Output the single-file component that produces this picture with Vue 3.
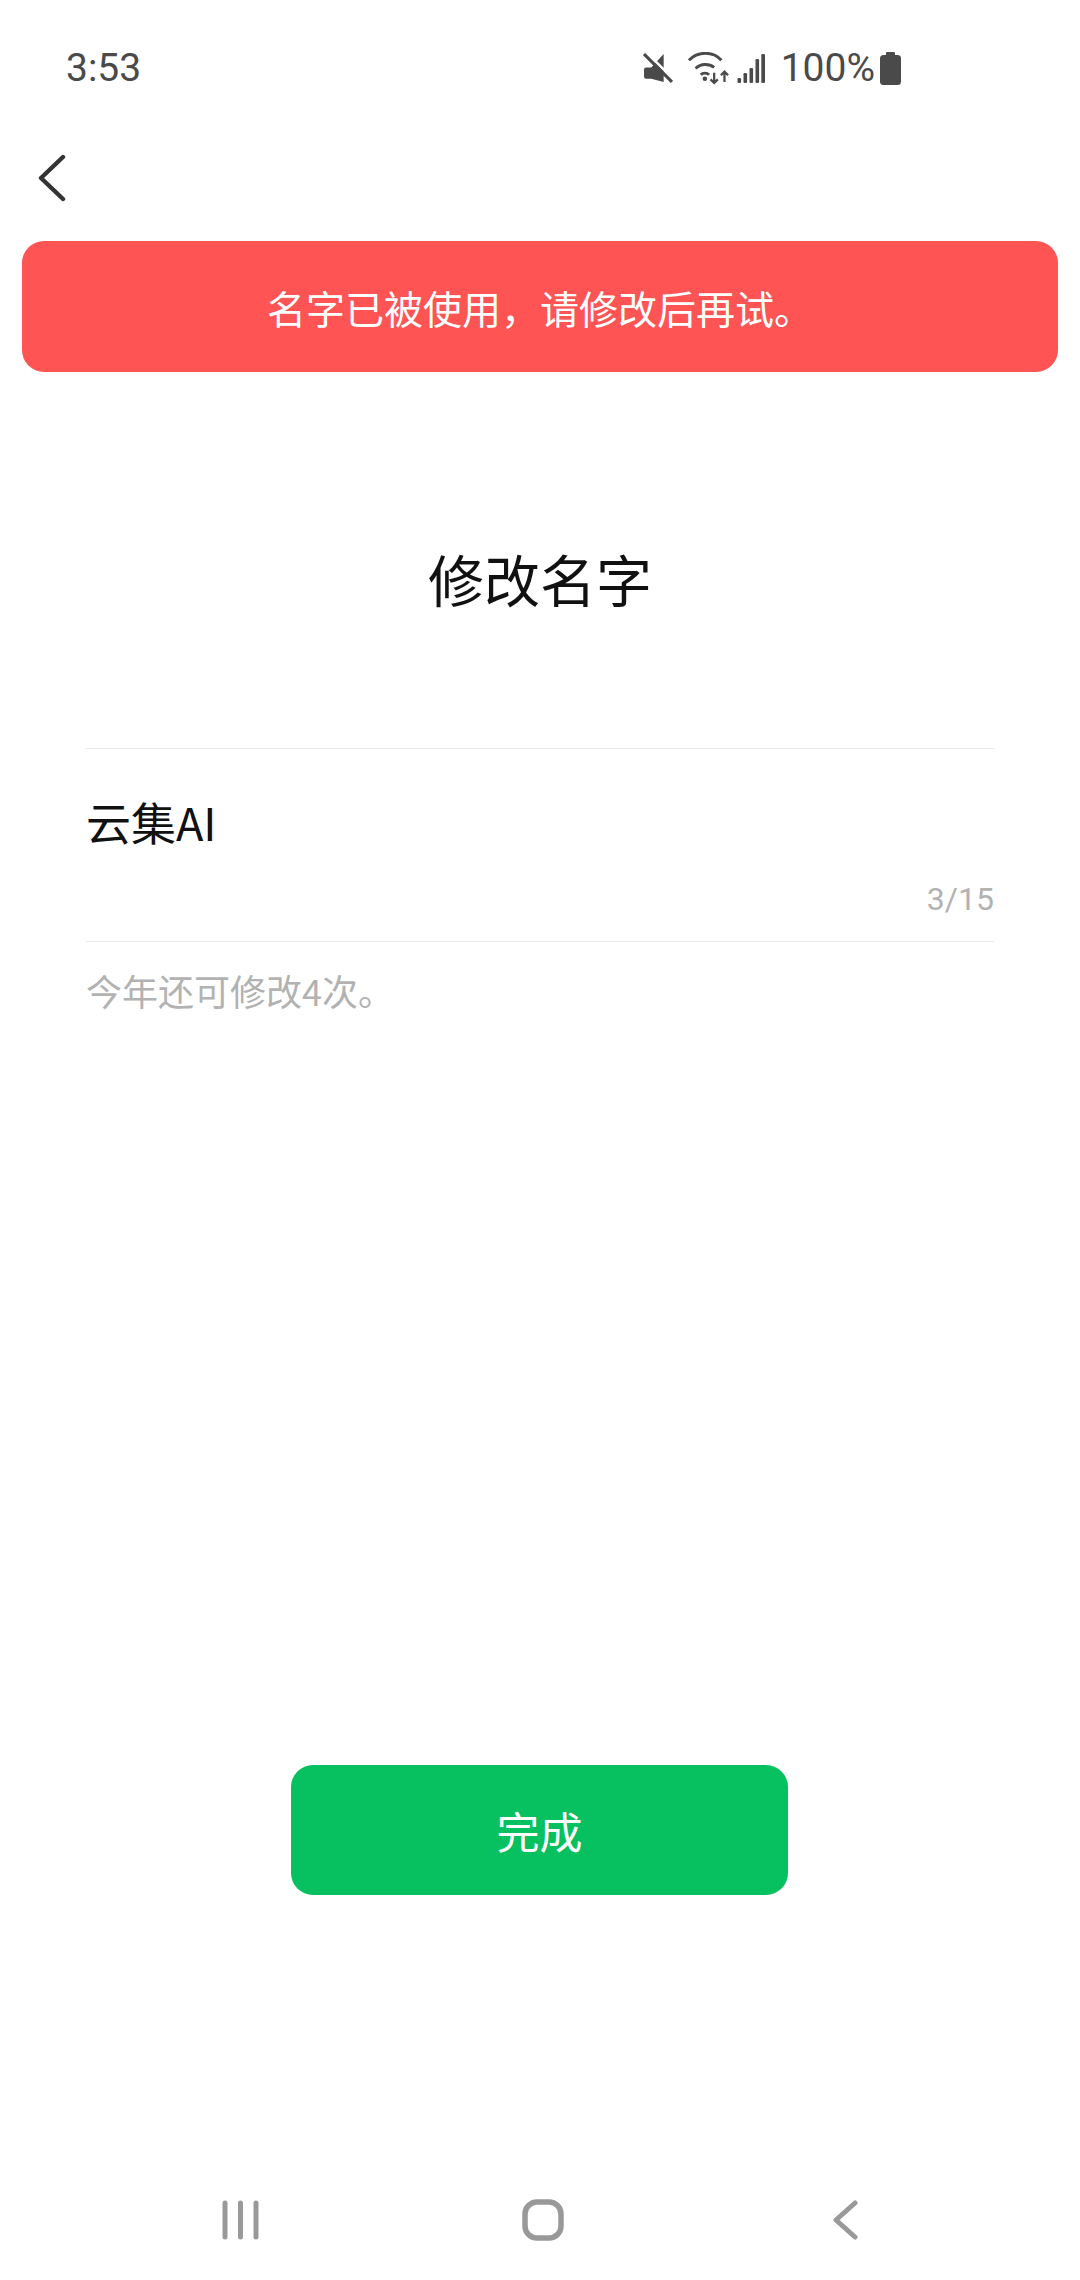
<template>
  <div class="page">
    <!-- status bar -->
    <div class="status-bar">
      <span class="time">3:53</span>
      <div class="status-right">
        <svg class="ic-mute" width="31" height="31" viewBox="0 0 30 30">
          <path d="M3 14h5l12-13v27L8 25H3a2 2 0 0 1-2-2v-7a2 2 0 0 1 2-2z" fill="#4a4a4a" />
          <path d="M3 -1l27 27" stroke="#fff" stroke-width="2.500" />
          <path d="M1 1l27 27" stroke="#4a4a4a" stroke-width="3" />
        </svg>
        <svg class="ic-wifi" width="43" height="33" viewBox="0 0 41 32" fill="none" stroke="#4a4a4a" stroke-width="2.8">
          <path d="M1.500 8C10 -1 25 -1 33 8" />
          <path d="M8 16c5-5 13-5 18-1" />
          <path d="M13 22c2-2 6-2 8 0" />
          <circle cx="17" cy="26" r="2.200" fill="#4a4a4a" stroke="none" />
          <path d="M26 20v10M22.500 26.500l3.500 3.500 3.500-3.500" stroke-width="2.200" />
          <path d="M36 29V19M32.500 22.500l3.500-3.500 3.500 3.500" stroke-width="2.200" />
        </svg>
        <svg class="ic-signal" width="28" height="30" viewBox="0 0 28 30" fill="#4a4a4a">
          <rect x="0.500" y="25" width="3.600" height="5" rx="1.200" />
          <rect x="6.500" y="20" width="3.600" height="10" rx="1.200" />
          <rect x="12.500" y="15" width="3.600" height="15" rx="1.200" />
          <rect x="18.500" y="6" width="3.600" height="24" rx="1.200" />
          <rect x="24.300" y="1" width="3.700" height="29" rx="1.200" />
        </svg>
        <span class="battery-text">100%</span>
        <svg class="ic-battery" width="21" height="33" viewBox="0 0 21 33" fill="#4a4a4a">
          <rect x="6" y="0" width="9" height="5" rx="1" />
          <rect x="0" y="3" width="21" height="30" rx="3.500" />
        </svg>
      </div>
    </div>

    <!-- nav -->
    <div class="nav">
      <svg width="30" height="48" viewBox="0 0 30 48" fill="none" stroke="#333" stroke-width="4.400" stroke-linecap="round" stroke-linejoin="round">
        <path d="M25 3L3 24l22 21" />
      </svg>
    </div>

    <div class="error-bar">名字已被使用，请修改后再试。</div>

    <h1 class="title">修改名字</h1>

    <div class="form">
      <div class="name-text">云集AI</div>
      <div class="count">3/15</div>
    </div>
    <div class="tip">今年还可修改4次。</div>

    <div class="spacer"></div>
    <div class="done-wrap">
      <button class="btn-done">完成</button>
    </div>
    <div class="spacer2"></div>

    <!-- android nav -->
    <div class="sys-nav">
      <svg class="nav-recent" width="41" height="40" viewBox="0 0 41 40" fill="none" stroke="#999" stroke-width="5" stroke-linecap="round">
        <path d="M5 3v34M20.500 3v34M36 3v34" />
      </svg>
      <svg class="nav-home" width="42" height="42" viewBox="0 0 42 42" fill="none" stroke="#999" stroke-width="5.500">
        <rect x="3" y="3" width="36" height="36" rx="12" />
      </svg>
      <svg class="nav-back" width="25" height="40" viewBox="0 0 25 40" fill="none" stroke="#999" stroke-width="5" stroke-linecap="round" stroke-linejoin="round">
        <path d="M22 3L3 20l19 17" />
      </svg>
    </div>
  </div>
</template>

<script setup>
</script>

<style>
html, body { margin: 0; background: #fff; }
</style>

<style scoped>
.page {
  width: 1080px;
  height: 2280px;
  display: flex;
  flex-direction: column;
  background: #fff;
  font-family: "Noto Sans CJK SC", "Liberation Sans", sans-serif;
  overflow: hidden;
}

/* status bar */
.status-bar {
  height: 68px;
  padding: 34px 179px 0 66px;
  display: flex;
  justify-content: space-between;
  align-items: center;
  color: #4a4a4a;
  font-family: Roboto, "Liberation Sans", sans-serif;
}
.time { font-size: 39px; }
.status-right { display: flex; align-items: center; }
.ic-mute { margin-right: 13px; }
.ic-wifi { margin-right: 7px; }
.ic-signal { margin-right: 16px; }
.battery-text { font-size: 39px; margin-right: 5px; }

/* nav */
.nav { height: 139px; padding-left: 38px; display: flex; align-items: center; padding-top: 12px; box-sizing: border-box; }

.error-bar {
  margin: 0 22px;
  height: 131px;
  border-radius: 22px;
  background: #fe5454;
  color: #fff;
  font-size: 39px;
  display: flex;
  align-items: center;
  justify-content: center;
}

.title {
  margin: 166px 0 0;
  height: 80px;
  line-height: 80px;
  text-align: center;
  font-size: 56px;
  font-weight: 400;
  color: #111;
}

.form {
  margin: 130px 86px 0;
  height: 192px;
  border-top: 1px solid #e8e8e8;
  border-bottom: 1px solid #e8e8e8;
}
.name-text {
  padding-top: 43px;
  font-size: 45px;
  line-height: 60px;
  color: #111;
}
.count {
  margin-top: 25px;
  text-align: right;
  font-size: 32px;
  line-height: 44px;
  color: #b2b2b2;
  font-family: Roboto, "Liberation Sans", sans-serif;
}
.tip {
  margin: 25px 86px 0;
  font-size: 36px;
  line-height: 46px;
  color: #b2b2b2;
}

.spacer { flex: 1; }
.done-wrap { display: flex; padding-left: 291px; }
.btn-done {
  width: 497px;
  height: 130px;
  border: none;
  border-radius: 22px;
  background: #07c160;
  color: #fff;
  font-size: 43px;
  font-family: inherit;
}
.spacer2 { height: 259px; }

.sys-nav {
  height: 126px;
  padding: 46px 0 0 220px;
  display: flex;
  align-items: flex-start;
  box-sizing: border-box;
}
.nav-home { margin-left: 261px; margin-top: -1px; }
.nav-back { margin-left: 269px; }
</style>
